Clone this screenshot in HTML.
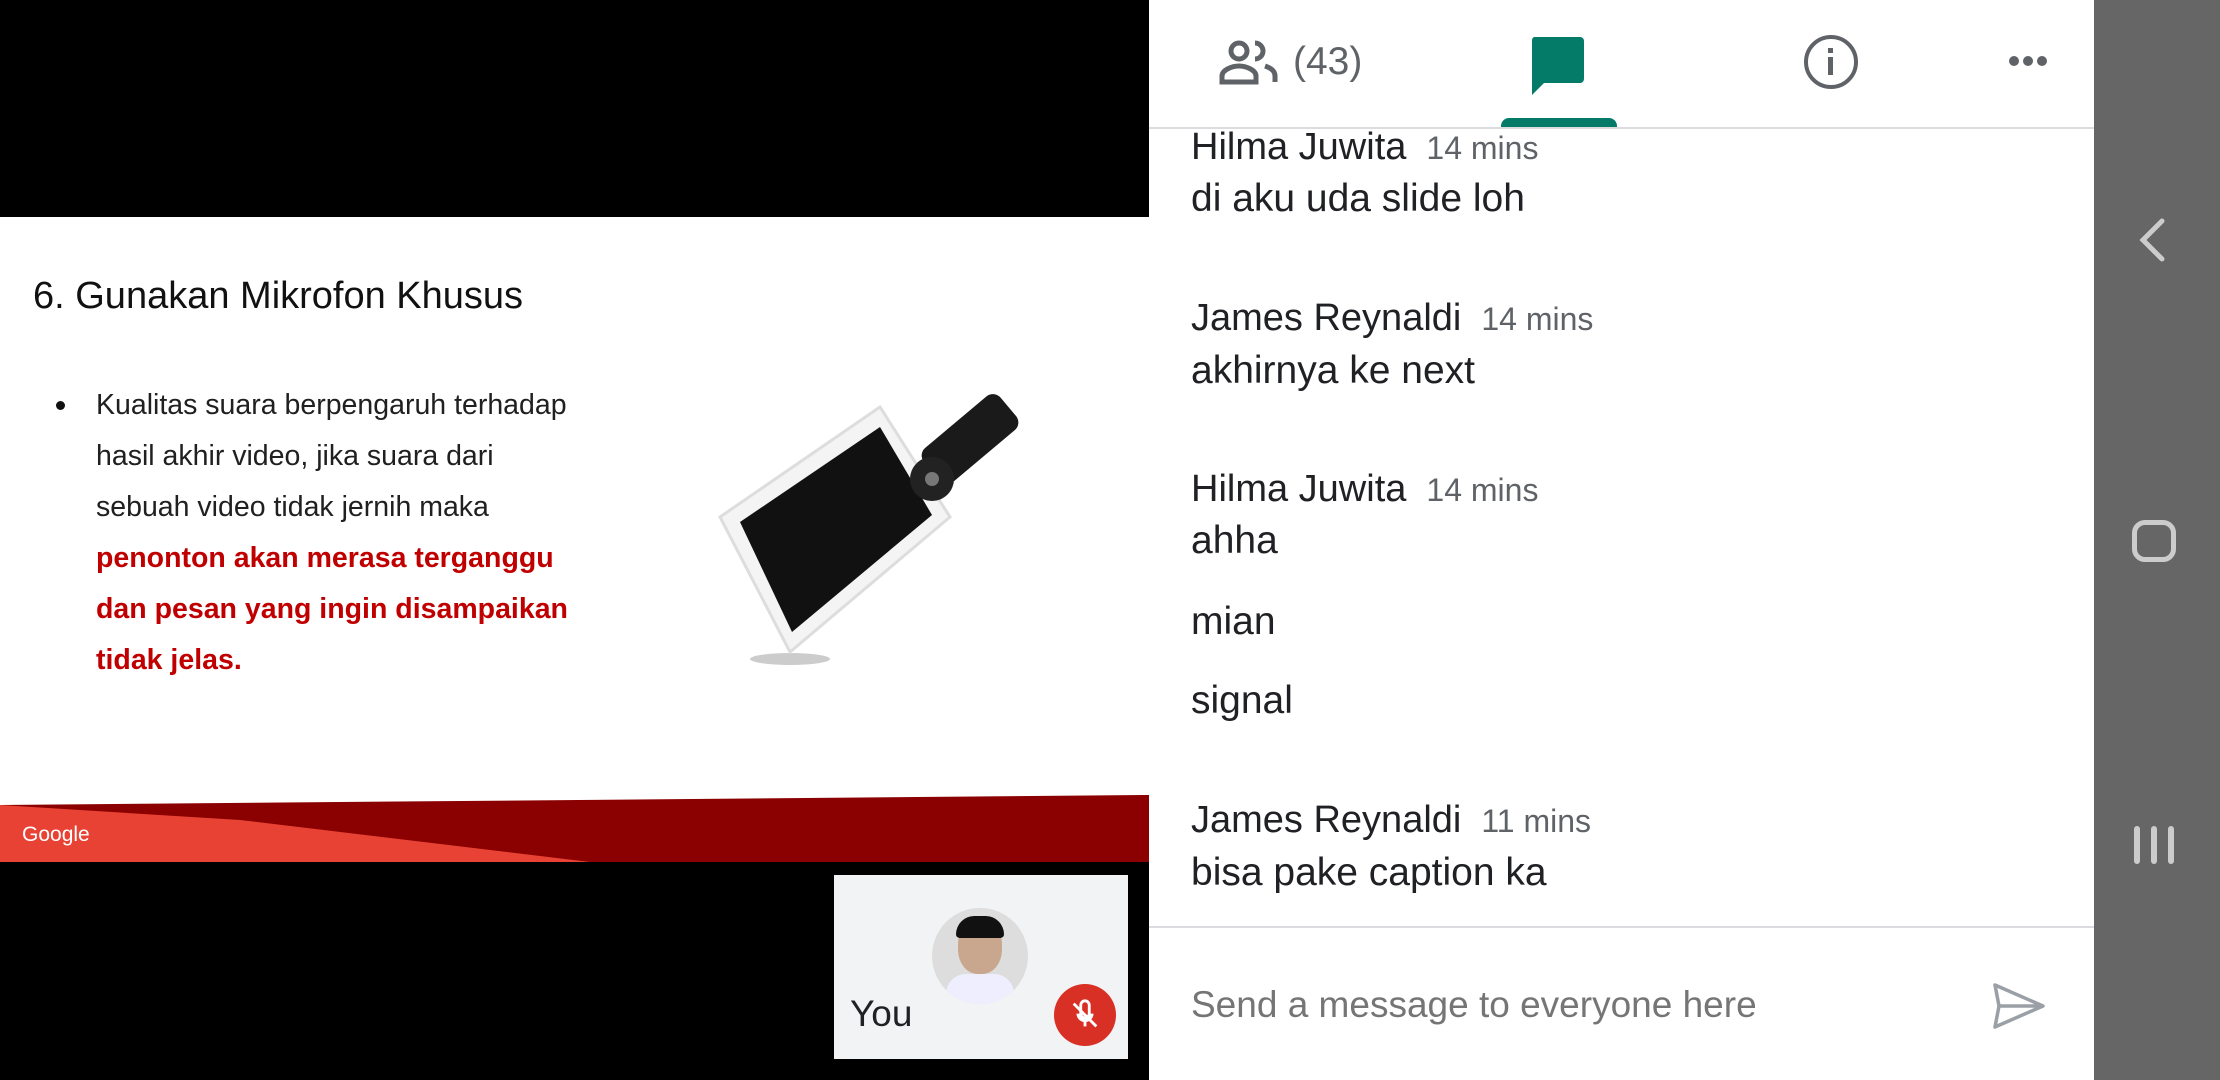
<!DOCTYPE html>
<html><head><meta charset="utf-8"><style>
*{margin:0;padding:0;box-sizing:border-box}
body{width:2220px;height:1080px;overflow:hidden;background:#000;font-family:"Liberation Sans",sans-serif;position:relative}
.a{position:absolute;white-space:nowrap}
.slide{position:absolute;left:0;top:217px;width:1149px;height:645px;background:#fff;overflow:hidden}
.bl{font-size:28.5px;color:#202020;line-height:51px}
.red{color:#c00000;font-weight:bold}
.name{font-size:38px;color:#202124}
.name span{font-size:32px;color:#5f6368;margin-left:20px}
.msg{font-size:39px;color:#202124}
</style></head><body>
<div class="slide">
  <div class="a" style="left:33px;top:58px;font-size:38px;color:#111">6. Gunakan Mikrofon Khusus</div>
  <div class="a" style="left:56px;top:184px;width:9px;height:9px;border-radius:50%;background:#111"></div>
  <div class="a bl" style="left:96px;top:163px">Kualitas suara berpengaruh terhadap<br>hasil akhir video, jika suara dari<br>sebuah video tidak jernih maka<br><span class="red">penonton akan merasa terganggu</span><br><span class="red">dan pesan yang ingin disampaikan</span><br><span class="red">tidak jelas.</span></div>
  <svg class="a" style="left:700px;top:170px" width="380" height="300" viewBox="0 0 380 300">
    <ellipse cx="90" cy="272" rx="40" ry="6" fill="#ccc"/>
    <polygon points="20,130 180,20 250,130 90,265" fill="#f4f4f4" stroke="#ddd" stroke-width="3"/>
    <polygon points="40,135 180,40 232,128 92,245" fill="#111"/>
    <rect x="220" y="30" width="100" height="44" rx="10" transform="rotate(-40 270 52)" fill="#1a1a1a"/>
    <circle cx="232" cy="92" r="22" fill="#222"/>
    <circle cx="232" cy="92" r="7" fill="#777"/>
  </svg>
  <svg class="a" style="left:0;top:578px" width="1149" height="67">
    <polygon points="0,10 1149,0 1149,67 0,67" fill="#8b0000"/>
    <polygon points="0,10 240,25 590,67 0,67" fill="#e84235"/>
  </svg>
  <div class="a" style="left:22px;top:606px;font-size:21px;color:#fff">Google</div>
</div>
<div class="a" style="left:834px;top:875px;width:294px;height:184px;background:#f1f3f4">
  <div class="a" style="left:98px;top:33px;width:96px;height:96px;border-radius:50%;background:#ddd;overflow:hidden">
    <div class="a" style="left:26px;top:12px;width:44px;height:54px;border-radius:45%;background:#c9a78e"></div>
    <div class="a" style="left:24px;top:8px;width:48px;height:22px;border-radius:20px 20px 4px 4px;background:#111"></div>
    <div class="a" style="left:14px;top:66px;width:68px;height:40px;border-radius:20px 20px 0 0;background:#eef"></div>
  </div>
  <div class="a" style="left:16px;top:118px;font-size:37px;color:#202124">You</div>
  <div class="a" style="left:220px;top:109px;width:62px;height:62px;border-radius:50%;background:#d93025"></div>
  <svg class="a" style="left:234px;top:123px" width="34" height="34" viewBox="0 0 24 24"><path d="M12 14a3 3 0 0 0 3-3V5a3 3 0 0 0-6 0v6a3 3 0 0 0 3 3zM17 11a5 5 0 0 1-10 0M12 16v4" stroke="#fff" stroke-width="2" fill="none"/><path d="M4 4l16 16" stroke="#fff" stroke-width="2"/></svg>
</div>

<div class="a" style="left:1149px;top:0;width:945px;height:1080px;background:#fff">
  <svg class="a" style="left:70px;top:40px" width="60" height="46" viewBox="0 0 60 46"><circle cx="20" cy="11" r="8" fill="none" stroke="#5f6368" stroke-width="5"/><path d="M3 42v-6c0-6 10-10 17-10s17 4 17 10v6z" fill="none" stroke="#5f6368" stroke-width="5"/><path d="M36 3a8 8 0 0 1 0 16M46 26c6 2 10 5 10 10v6" fill="none" stroke="#5f6368" stroke-width="5"/></svg>
  <div class="a" style="left:144px;top:40px;font-size:39px;color:#5f6368">(43)</div>
  <svg class="a" style="left:381px;top:37px" width="54" height="58" viewBox="0 0 54 58"><path d="M4 0h46a4 4 0 0 1 4 4v38a4 4 0 0 1-4 4H14L2 58V4a4 4 0 0 1 2-4z" fill="#047a68"/></svg>
  <div class="a" style="left:352px;top:118px;width:116px;height:9px;border-radius:8px 8px 0 0;background:#047a68"></div>
  <div class="a" style="left:655px;top:35px;width:54px;height:54px;border-radius:50%;border:4px solid #5f6368"></div>
  <div class="a" style="left:679px;top:48px;width:5px;height:5px;background:#5f6368"></div>
  <div class="a" style="left:679px;top:57px;width:5px;height:18px;background:#5f6368"></div>
  <div class="a" style="left:860px;top:56px;font-size:0">
    <span style="display:inline-block;width:10px;height:10px;border-radius:50%;background:#5f6368;margin-right:4px"></span><span style="display:inline-block;width:10px;height:10px;border-radius:50%;background:#5f6368;margin-right:4px"></span><span style="display:inline-block;width:10px;height:10px;border-radius:50%;background:#5f6368"></span>
  </div>
  <div class="a" style="left:0;top:127px;width:945px;height:2px;background:#dadce0"></div>

  <div class="a name" style="left:42px;top:126px">Hilma Juwita<span>14 mins</span></div>
  <div class="a msg" style="left:42px;top:177px">di aku uda slide loh</div>
  <div class="a name" style="left:42px;top:297px">James Reynaldi<span>14 mins</span></div>
  <div class="a msg" style="left:42px;top:349px">akhirnya ke next</div>
  <div class="a name" style="left:42px;top:468px">Hilma Juwita<span>14 mins</span></div>
  <div class="a msg" style="left:42px;top:519px">ahha</div>
  <div class="a msg" style="left:42px;top:600px">mian</div>
  <div class="a msg" style="left:42px;top:679px">signal</div>
  <div class="a name" style="left:42px;top:799px">James Reynaldi<span>11 mins</span></div>
  <div class="a msg" style="left:42px;top:851px">bisa pake caption ka</div>

  <div class="a" style="left:0;top:926px;width:945px;height:2px;background:#dadce0"></div>
  <div class="a" style="left:42px;top:984px;font-size:37px;color:#757575">Send a message to everyone here</div>
  <svg class="a" style="left:843px;top:982px" width="54" height="48" viewBox="0 0 54 48"><path d="M3 3l48 21L3 45l4-21zM7 24h44" fill="none" stroke="#9aa0a6" stroke-width="3.5" stroke-linejoin="round"/></svg>
</div>

<div class="a" style="left:2094px;top:0;width:126px;height:1080px;background:#666"></div>
<svg class="a" style="left:2138px;top:218px" width="30" height="44" viewBox="0 0 30 44"><path d="M24 3L5 22l19 19" fill="none" stroke="#ccc" stroke-width="5" stroke-linecap="round"/></svg>
<div class="a" style="left:2132px;top:520px;width:44px;height:42px;border:5px solid #ccc;border-radius:13px"></div>
<div class="a" style="left:2134px;top:826px;width:6px;height:38px;border-radius:3px;background:#ccc"></div>
<div class="a" style="left:2151px;top:826px;width:6px;height:38px;border-radius:3px;background:#ccc"></div>
<div class="a" style="left:2168px;top:826px;width:6px;height:38px;border-radius:3px;background:#ccc"></div>
</body></html>
